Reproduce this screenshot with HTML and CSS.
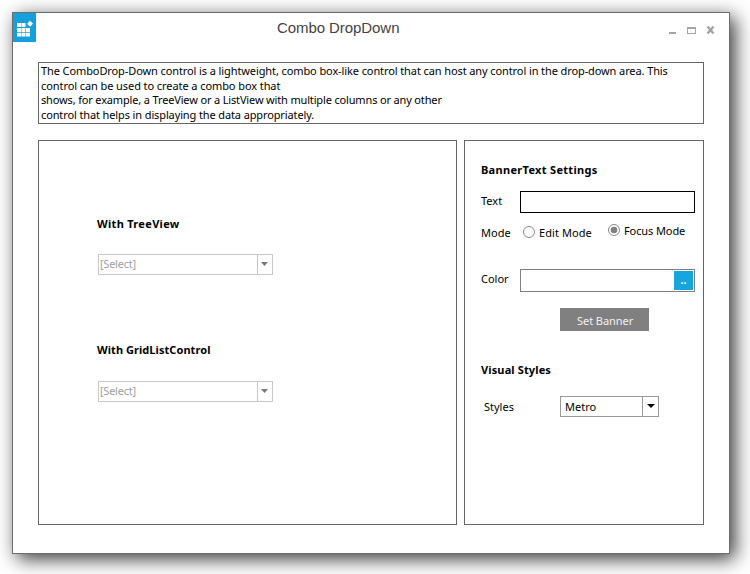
FILE: index.html
```html
<!DOCTYPE html>
<html lang="en">
<head>
<meta charset="utf-8">
<title>Combo DropDown</title>
<link rel="stylesheet" href="styles.css">
</head>
<body>
<main class="window">
  <header class="titlebar">
    <svg class="app-icon" width="23" height="29" viewBox="0 0 23 29">
      <rect width="23" height="29" fill="#159fdd"/>
      <path fill="#fff" d="M4 10h4v4H4zM8.500 10h4v4h-4zM4 15h4v4H4zM8.500 15h4v4h-4zM13 15h4v4h-4zM4 19.700h4v3.800H4zM8.500 19.700h4v3.800h-4zM13 19.700h4v3.800h-4zM16.800 7.800l3.200 2.700-2.700 3.200-3.200-2.700z"/>
    </svg>
    <h1 class="title">Combo DropDown</h1>
    <svg class="controls" width="47" height="10" viewBox="0 0 47 10">
      <path fill="#a5a5a5" d="M0 6h7v2H0zM18 1h9v7h-9zM19 3v4h7V3z" fill-rule="evenodd"/>
      <path stroke="#a5a5a5" stroke-width="2.400" d="M38.500 .5l6 7M44.500 .5l-6 7"/>
    </svg>
  </header>
  <section class="description">
    <p class="l1">The ComboDrop-Down control is a lightweight, combo box-like control that can host any control in the drop-down area. This</p>
    <p class="l2">control can be used to create a combo box that</p>
    <p class="l3">shows, for example, a TreeView or a ListView with multiple columns or any other</p>
    <p class="l4">control that helps in displaying the data appropriately.</p>
  </section>
  <div class="panels">
    <section class="panel demos">
      <h2 class="tree">With TreeView</h2>
      <div class="combo disabled"><span>[Select]</span><i><svg width="7" height="4"><path d="M0 0h7L3.500 4z"/></svg></i></div>
      <h2 class="grid">With GridListControl</h2>
      <div class="combo disabled"><span>[Select]</span><i><svg width="7" height="4"><path d="M0 0h7L3.500 4z"/></svg></i></div>
    </section>
    <section class="panel settings">
      <h2 class="banner">BannerText Settings</h2>
      <div class="row text-row"><label>Text</label><div class="textbox"></div></div>
      <div class="row mode-row">
        <label>Mode</label>
        <div class="radio"><svg width="12" height="12"><circle cx="6" cy="6" r="5.500"/></svg><span>Edit Mode</span></div>
        <div class="radio focus"><svg width="12" height="12"><circle cx="6" cy="6" r="5.500"/><circle class="dot" cx="6" cy="6" r="3.300"/></svg><span>Focus Mode</span></div>
      </div>
      <div class="row color-row"><label>Color</label><div class="colorbox"><b>..</b></div></div>
      <div class="button">Set Banner</div>
      <h2 class="visual">Visual Styles</h2>
      <div class="row style-row"><label>Styles</label><div class="combo metro"><span>Metro</span><i><svg width="8" height="4"><path d="M0 0h8L4 4z"/></svg></i></div></div>
    </section>
  </div>
</main>
</body>
</html>
```
FILE: styles.css
```css
* { box-sizing: border-box; }
body { margin: 0; height: 574px; padding: 12px; background: #fff; overflow: hidden; font: 11px/15px "Noto Sans", sans-serif; color: #000; }
h1, h2, p { margin: 0; font-size: inherit; white-space: nowrap; }
svg { display: block; flex: none; }
.window { width: 718px; height: 542px; border: 1px solid #6d6d6d; background: #fff; box-shadow: 5px 5px 18px rgba(0, 0, 0, .78); }
.titlebar { display: flex; height: 49px; align-items: flex-start; }
.title { width: 122px; margin: 6px 0 0 241px; font: 15px/18px "Liberation Sans", sans-serif; letter-spacing: -.07px; color: #444; }
.controls { margin: 13px 0 0 270px; }
.description { width: 666px; height: 62px; margin-left: 25px; padding: 1px 2px; border: 1px solid #666; line-height: 14.600px; }
.l1 { letter-spacing: -.1px; }
.l2 { letter-spacing: -.08px; }
.l3 { letter-spacing: -.155px; }
.l4 { letter-spacing: -.12px; }
.panels { display: flex; gap: 7px; margin: 16px 0 0 25px; }
.panel { height: 385px; border: 1px solid #666; }
.panel h2 { height: 15px; font-weight: bold; }
.tree, .banner { letter-spacing: .31px; }
.grid { letter-spacing: .06px; }
.demos { width: 419px; padding: 75px 0 0 58px; }
.combo { display: flex; width: 175px; height: 21px; border: 1px solid #c8c8c8; }
.combo span { flex: 1; padding-left: 1px; line-height: 18px; }
.combo i { display: flex; width: 16px; justify-content: center; padding-top: 7px; border-left: 1px solid #c8c8c8; }
.disabled { margin: 23px 0 67px 1px; color: #a0a0a0; fill: #777; letter-spacing: -.25px; }
.disabled i { width: 15px; padding-right: 1px; }
.disabled + h2 + .disabled { margin-top: 24px; }
.settings { width: 240px; padding: 21px 0 0 16px; }
.row { display: flex; align-items: flex-start; }
.text-row { margin-top: 14px; }
.text-row label, .color-row label { width: 39px; padding-top: 2px; }
.textbox { width: 175px; height: 22px; border: 1px solid #000; }
.mode-row { height: 20px; margin-top: 12px; }
.mode-row label { width: 42px; }
.radio { display: flex; gap: 4px; width: 85px; white-space: nowrap; }
.radio svg { margin-top: 1px; fill: none; stroke: #888; }
.radio span { letter-spacing: .08px; }
.radio.focus { margin-top: -2px; }
.radio.focus span { letter-spacing: -.1px; }
.radio .dot { fill: #808080; stroke: none; }
.color-row { margin-top: 24px; }
.colorbox { display: flex; justify-content: flex-end; width: 175px; height: 23px; padding: 1px; border: 1px solid #808080; }
.colorbox b { width: 19px; height: 19px; background: #16a5dc; color: #fff; text-align: center; line-height: 17px; }
.button { width: 89px; height: 23px; margin: 16px 0 0 79px; padding-left: 17px; background: #808080; color: #f2f2f2; line-height: 26px; letter-spacing: -.05px; }
.visual { margin-top: 31px; letter-spacing: .13px; }
.style-row { margin-top: 19px; }
.style-row label { width: 79px; padding: 3px 0 0 3px; }
.combo.metro, .metro i { border-color: #999; }
.combo.metro { width: 99px; }
.metro span { padding-left: 4px; line-height: 19px; }
```
